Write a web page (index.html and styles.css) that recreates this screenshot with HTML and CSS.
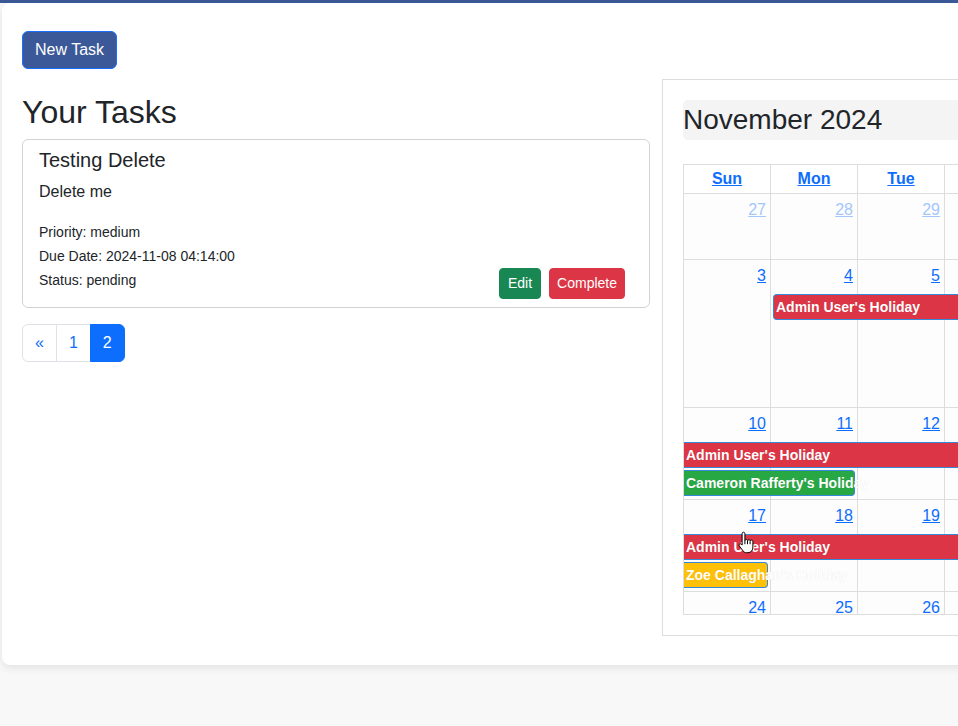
FILE: index.html
```html
<!DOCTYPE html>
<html lang="en">
<head>
<meta charset="utf-8">
<title>Tasks</title>
<link rel="stylesheet" href="styles.css">
</head>
<body>
<div class="topbar"></div>
<div class="page">
  <main class="panel">
    <button class="btn btn-new" type="button">New Task</button>
    <div class="layout">
      <section class="tasks">
        <h2 class="tasks-heading">Your Tasks</h2>
        <div class="task-card">
          <h5 class="task-title">Testing Delete</h5>
          <p class="task-desc">Delete me</p>
          <div class="task-foot">
            <p class="task-meta"><small>Priority: medium</small><br><small>Due Date: 2024-11-08 04:14:00</small><br><small>Status: pending</small></p>
            <div class="task-actions">
              <button class="btn btn-sm btn-edit" type="button">Edit</button>
              <button class="btn btn-sm btn-complete" type="button">Complete</button>
            </div>
          </div>
        </div>
        <nav class="pagination">
          <a class="page-link first" href="#">&laquo;</a>
          <a class="page-link" href="#">1</a>
          <a class="page-link active last" href="#">2</a>
        </nav>
      </section>

      <section class="calendar">
        <h3 class="cal-title">November 2024</h3>
        <div class="cal-scroll">
          <div class="cal-head">
            <div class="head-cell"><a href="#">Sun</a></div>
            <div class="head-cell"><a href="#">Mon</a></div>
            <div class="head-cell"><a href="#">Tue</a></div>
            <div class="head-cell"><a href="#">Wed</a></div>
            <div class="head-cell"><a href="#">Thu</a></div>
            <div class="head-cell"><a href="#">Fri</a></div>
            <div class="head-cell"><a href="#">Sat</a></div>
          </div>

          <div class="week week-1">
            <div class="day c1 other"><a href="#">27</a></div>
            <div class="day c2 other"><a href="#">28</a></div>
            <div class="day c3 other"><a href="#">29</a></div>
            <div class="day c4 other"><a href="#">30</a></div>
            <div class="day c5 other"><a href="#">31</a></div>
            <div class="day c6"><a href="#">1</a></div>
            <div class="day c7"><a href="#">2</a></div>
          </div>

          <div class="week week-2">
            <div class="day c1"><a href="#">3</a></div>
            <div class="day c2"><a href="#">4</a></div>
            <div class="day c3"><a href="#">5</a></div>
            <div class="day c4"><a href="#">6</a></div>
            <div class="day c5"><a href="#">7</a></div>
            <div class="day c6"><a href="#">8</a></div>
            <div class="day c7"><a href="#">9</a></div>
            <div class="event ev-red starts" style="grid-column: 2 / 8; grid-row: 2;">Admin User's Holiday</div>
          </div>

          <div class="week week-3">
            <div class="day c1"><a href="#">10</a></div>
            <div class="day c2"><a href="#">11</a></div>
            <div class="day c3"><a href="#">12</a></div>
            <div class="day c4"><a href="#">13</a></div>
            <div class="day c5"><a href="#">14</a></div>
            <div class="day c6"><a href="#">15</a></div>
            <div class="day c7"><a href="#">16</a></div>
            <div class="event ev-red" style="grid-column: 1 / 8; grid-row: 2;">Admin User's Holiday</div>
            <div class="event ev-green ends" style="grid-column: 1 / 3; grid-row: 3;">Cameron Rafferty's Holiday</div>
          </div>

          <div class="week week-4">
            <div class="day c1"><a href="#">17</a></div>
            <div class="day c2"><a href="#">18</a></div>
            <div class="day c3"><a href="#">19</a></div>
            <div class="day c4"><a href="#">20</a></div>
            <div class="day c5"><a href="#">21</a></div>
            <div class="day c6"><a href="#">22</a></div>
            <div class="day c7"><a href="#">23</a></div>
            <div class="event ev-red" style="grid-column: 1 / 8; grid-row: 2;">Admin User's Holiday</div>
            <div class="event ev-yellow ends" style="grid-column: 1 / 2; grid-row: 3;">Zoe Callaghan's Holiday</div>
          </div>

          <div class="week week-5">
            <div class="day c1"><a href="#">24</a></div>
            <div class="day c2"><a href="#">25</a></div>
            <div class="day c3"><a href="#">26</a></div>
            <div class="day c4"><a href="#">27</a></div>
            <div class="day c5"><a href="#">28</a></div>
            <div class="day c6"><a href="#">29</a></div>
            <div class="day c7"><a href="#">30</a></div>
          </div>
        </div>
      </section>
    </div>
  </main>
</div>

<svg class="cursor" width="20" height="25" viewBox="0 0 20 25" aria-hidden="true">
  <path d="M6.5 1.2c.8 0 1.4.6 1.4 1.4v7l.2-.1c.2-.6.7-1 1.3-1s1.2.5 1.3 1.1c.2-.5.7-.9 1.3-.9.7 0 1.2.5 1.3 1.1.2-.4.7-.7 1.2-.7.8 0 1.4.6 1.4 1.4v5.6c0 3.2-1.9 5.6-5 5.6H9.4c-1.5 0-2.6-.7-3.4-1.9L2.3 15c-.4-.7-.2-1.5.4-1.9.6-.4 1.4-.3 1.9.3l.5.7V2.6c0-.8.6-1.4 1.4-1.4z" fill="#fff" stroke="#000" stroke-width="1" stroke-linejoin="round"/>
  <path d="M7.9 9.6v3.6M10.5 9.8v3.4M13.1 10.2v3" stroke="#000" stroke-width="1" fill="none"/>
</svg>
</body>
</html>
```

FILE: styles.css
```css
* {
  box-sizing: border-box;
}

html,
body {
  overflow: hidden;
}

body {
  margin: 0;
  background: #f8f8f8;
  font-family: "Liberation Sans", Arial, sans-serif;
  font-size: 16px;
  line-height: 1.5;
  color: #212529;
  position: relative;
  min-height: 726px;
}

.topbar {
  height: 3px;
  background: #3b5998;
}

.page {
  padding-left: 2px;
}

.panel {
  display: block;
  width: 1340px;
  background: #fff;
  border-radius: 8px;
  box-shadow: 0 3px 8px rgba(0, 0, 0, 0.09);
  padding: 28px 20px 29px;
}

.btn {
  display: inline-block;
  font-family: inherit;
  font-size: 16px;
  line-height: 24px;
  padding: 6px 12px;
  border: 1px solid transparent;
  border-radius: 6px;
  color: #fff;
  cursor: pointer;
}

.btn-new {
  display: block;
  background: #3b5998;
  border-color: #1a6efd;
}

.btn-sm {
  font-size: 14px;
  line-height: 21px;
  padding: 4px 8px;
  border-radius: 4px;
}

.btn-edit {
  background: #198754;
  border-color: #198754;
}

.btn-complete {
  background: #dc3545;
  border-color: #dc3545;
  padding: 4px 7px;
}

.layout {
  display: flex;
  align-items: flex-start;
  gap: 12px;
  margin-top: 10px;
}

.tasks {
  flex: none;
  width: 628px;
  padding-top: 14px;
}

.tasks-heading {
  margin: 0 0 8px;
  font-size: 32px;
  font-weight: 500;
  line-height: 1.2;
}

.task-card {
  border: 1px solid rgba(0, 0, 0, 0.175);
  border-radius: 6px;
  padding: 8px 16px 8px;
}

.task-title {
  margin: 0 0 8px;
  font-size: 20px;
  font-weight: 500;
  line-height: 1.2;
}

.task-desc {
  margin: 0 0 16px;
  line-height: 24px;
}

.task-foot {
  display: flex;
  justify-content: space-between;
  align-items: flex-end;
}

.task-meta {
  margin: 0 0 7px;
  line-height: 24px;
}

.task-meta small {
  font-size: 14px;
}

.task-actions {
  display: flex;
  gap: 8px;
  margin-right: 8px;
}

.pagination {
  display: flex;
  margin-top: 16px;
}

.page-link {
  display: block;
  padding: 6px 12px;
  line-height: 24px;
  font-size: 16px;
  color: #0d6efd;
  text-decoration: none;
  border: 1px solid #dee2e6;
  background: #fff;
  margin-left: -1px;
}

.page-link.first {
  margin-left: 0;
  border-radius: 6px 0 0 6px;
}

.page-link.last {
  border-radius: 0 6px 6px 0;
}

.page-link.active {
  background: #0d6efd;
  border-color: #0d6efd;
  color: #fff;
}

/* Calendar */
.calendar {
  flex: none;
  border: 1px solid #dddddd;
  padding: 20px;
}

.cal-title {
  margin: 0 0 24px;
  padding: 3px 1px 3px 0;
  font-size: 28px;
  line-height: 34px;
  font-weight: 500;
  background: #f4f4f4;
  border-radius: 5px;
}

.cal-scroll {
  width: 610px;
  height: 451px;
  overflow: hidden;
  border-top: 1px solid #dddddd;
  border-left: 1px solid #dddddd;
  border-bottom: 1px solid #dddddd;
}

.cal-head {
  display: grid;
  grid-template-columns: repeat(7, 87px);
}

.head-cell {
  height: 29px;
  padding: 2px 0;
  text-align: center;
  border-right: 1px solid #dddddd;
  border-bottom: 1px solid #dddddd;
  background: #fff;
  line-height: 24px;
}

.head-cell a {
  color: #0d6efd;
  font-weight: 700;
  text-decoration: underline;
}

.week {
  display: grid;
  grid-template-columns: repeat(7, 87px);
  grid-template-rows: 32px 1fr;
}

.week-1 { height: 66px; }
.week-2 { height: 148px; grid-template-rows: 32px 28px 1fr; }
.week-3 { height: 92px; grid-template-rows: 32px 28px 28px 1fr; }
.week-4 { height: 92px; grid-template-rows: 32px 28px 28px 1fr; }
.week-5 { height: 92px; }

.day {
  grid-row: 1 / -1;
  background: #fdfdfd;
  border-right: 1px solid #dddddd;
  border-bottom: 1px solid #dddddd;
  text-align: right;
  padding: 4px 4px 0 0;
  line-height: 24px;
}

.c1 { grid-column: 1; }
.c2 { grid-column: 2; }
.c3 { grid-column: 3; }
.c4 { grid-column: 4; }
.c5 { grid-column: 5; }
.c6 { grid-column: 6; }
.c7 { grid-column: 7; }

.day a {
  color: #0d6efd;
  text-decoration: underline;
}

.day.other a {
  color: #a3c7fb;
}

.event {
  position: relative;
  z-index: 1;
  margin-top: 2px;
  height: 26px;
  padding: 0 0 0 2px;
  border-top: 1px solid #3788d8;
  border-bottom: 1px solid #3788d8;
  color: #fff;
  font-size: 14px;
  font-weight: 700;
  line-height: 24px;
  white-space: nowrap;
  text-shadow: 0 0 1px rgba(0, 0, 0, 0.12);
}

.event.starts {
  margin-left: 2px;
  padding-left: 2px;
  border-left: 1px solid #3788d8;
  border-radius: 4px 0 0 4px;
}

.event.ends {
  margin-right: 3px;
  border-right: 1px solid #3788d8;
  border-radius: 0 4px 4px 0;
}

.ev-red { background: #dc3545; }
.ev-green { background: #28a745; }
.ev-yellow { background: #ffc107; }

.cursor {
  position: absolute;
  left: 737px;
  top: 531px;
  z-index: 5;
}
```
